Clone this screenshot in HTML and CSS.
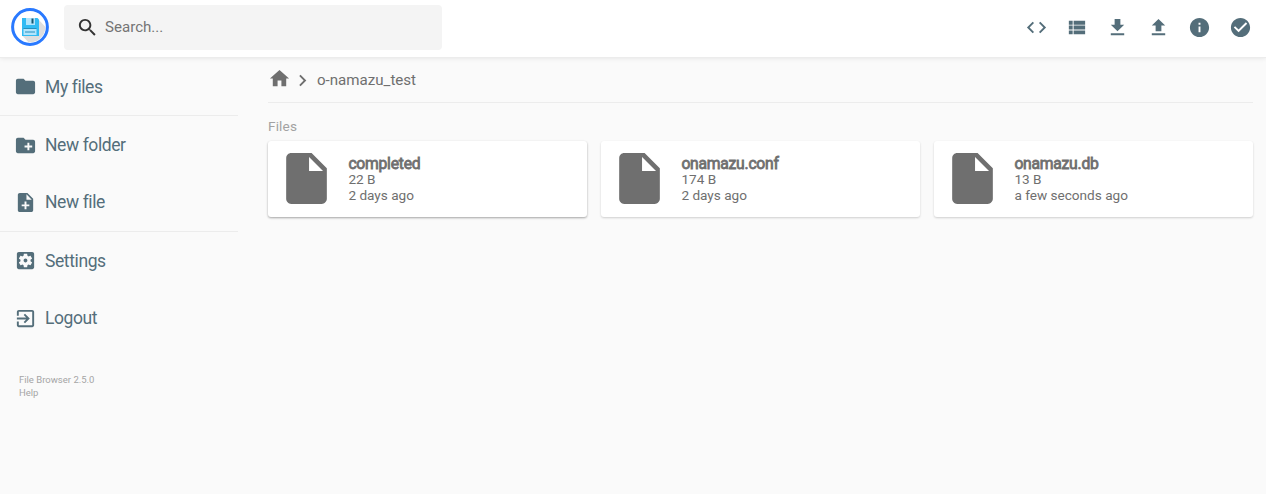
FILE: index.html
```html
<!DOCTYPE html>
<html lang="en">
<head>
<meta charset="utf-8">
<title>o-namazu_test - File Browser</title>
<link rel="stylesheet" href="styles.css">
</head>
<body>
<header class="topbar">
  <svg class="logo" viewBox="0 0 38 38">
    <circle cx="19" cy="19" r="17.5" fill="#fff"/>
    <path d="M27 11l7.5 8a16 16 0 0 1-17 15.300L11.500 28z" fill="#dedede"/>
    <circle cx="19" cy="19" r="17.400" fill="none" stroke="#2979ff" stroke-width="3"/>
    <path d="M11 10h15.500l1.500 1.500V28H11z" fill="#31bbf3"/>
    <path d="M15 10h9v7h-9z" fill="#b3e5fc"/>
    <path d="M20.500 10.500h2v5h-2z" fill="#14566f"/>
    <path d="M12.500 21h13v6h-13z" fill="#b3e5fc"/>
    <path d="M12.500 20h13v1h-13zM14 23.500h10v1H14z" fill="#278fbd"/>
  </svg>
  <div class="search">
    <svg class="icon" viewBox="0 0 24 24"><path d="M15.500 14h-.79l-.28-.27C15.410 12.590 16 11.110 16 9.500 16 5.910 13.090 3 9.500 3S3 5.910 3 9.500 5.910 16 9.500 16c1.610 0 3.090-.59 4.230-1.570l.27.28v.79l5 4.990L20.490 19l-4.990-5zm-6 0C7.010 14 5 11.990 5 9.500S7.010 5 9.500 5 14 7.010 14 9.500 11.990 14 9.500 14z"/></svg>
    <span>Search...</span>
  </div>
  <div class="actions">
    <span class="action"><svg class="icon" viewBox="0 0 24 24"><path d="M9.400 16.600L4.800 12l4.600-4.600L8 6l-6 6 6 6 1.400-1.400zm5.200 0l4.600-4.600-4.600-4.600L16 6l6 6-6 6-1.400-1.400z"/></svg></span>
    <span class="action"><svg class="icon" viewBox="0 0 24 24"><path d="M4 14h4v-4H4v4zm0 5h4v-4H4v4zM4 9h4V5H4v4zm5 5h12v-4H9v4zm0 5h12v-4H9v4zM9 5v4h12V5H9z"/></svg></span>
    <span class="action"><svg class="icon" viewBox="0 0 24 24"><path d="M19 9h-4V3H9v6H5l7 7 7-7zM5 18v2h14v-2H5z"/></svg></span>
    <span class="action"><svg class="icon" viewBox="0 0 24 24"><path d="M9 16h6v-6h4l-7-7-7 7h4zm-4 2h14v2H5z"/></svg></span>
    <span class="action"><svg class="icon" viewBox="0 0 24 24"><path d="M12 2C6.480 2 2 6.480 2 12s4.480 10 10 10 10-4.480 10-10S17.520 2 12 2zm1 15h-2v-6h2v6zm0-8h-2V7h2v2z"/></svg></span>
    <span class="action"><svg class="icon" viewBox="0 0 24 24"><path d="M12 2C6.480 2 2 6.480 2 12s4.480 10 10 10 10-4.480 10-10S17.520 2 12 2zm-2 15l-5-5 1.410-1.410L10 14.170l7.590-7.590L19 8l-9 9z"/></svg></span>
  </div>
</header>
<div class="layout">
  <nav class="sidebar">
    <div class="group">
      <a class="entry"><svg class="icon" viewBox="0 0 24 24"><path d="M10 4H4c-1.100 0-1.990.9-1.990 2L2 18c0 1.100.9 2 2 2h16c1.100 0 2-.9 2-2V8c0-1.100-.9-2-2-2h-8l-2-2z"/></svg>My files</a>
    </div>
    <div class="group">
      <a class="entry"><svg class="icon" viewBox="0 0 24 24"><path d="M20 6h-8l-2-2H4c-1.110 0-1.990.89-1.990 2L2 18c0 1.110.89 2 2 2h16c1.110 0 2-.89 2-2V8c0-1.110-.89-2-2-2zm-1 8h-3v3h-2v-3h-3v-2h3V9h2v3h3v2z"/></svg>New folder</a>
      <a class="entry"><svg class="icon" viewBox="0 0 24 24"><path d="M14 2H6c-1.100 0-1.990.9-1.990 2L4 20c0 1.100.89 2 1.990 2H18c1.100 0 2-.9 2-2V8l-6-6zm2 14h-3v3h-2v-3H8v-2h3v-3h2v3h3v2zm-3-7V3.500L18.500 9H13z"/></svg>New file</a>
    </div>
    <div class="group">
      <a class="entry"><svg class="icon" viewBox="0 0 24 24"><path d="M12 10c-1.100 0-2 .9-2 2s.9 2 2 2 2-.9 2-2-.9-2-2-2zm7-7H5c-1.110 0-2 .9-2 2v14c0 1.100.89 2 2 2h14c1.110 0 2-.9 2-2V5c0-1.100-.89-2-2-2zm-1.750 9c0 .23-.02.46-.05.68l1.480 1.160c.13.11.17.3.08.45l-1.400 2.420c-.09.15-.27.21-.43.15l-1.740-.7c-.36.28-.76.51-1.180.69l-.26 1.850c-.03.17-.18.3-.35.3h-2.800c-.17 0-.32-.13-.35-.29l-.26-1.850c-.43-.18-.82-.41-1.180-.69l-1.740.7c-.16.06-.34 0-.43-.15l-1.400-2.420c-.09-.15-.05-.34.08-.45l1.480-1.160c-.03-.23-.05-.46-.05-.69s.02-.46.05-.68l-1.480-1.160c-.13-.11-.17-.3-.08-.45l1.400-2.420c.09-.15.27-.21.43-.15l1.740.7c.36-.28.76-.51 1.180-.69l.26-1.850c.03-.17.18-.3.35-.3h2.800c.17 0 .32.13.35.29l.26 1.850c.43.18.82.41 1.180.69l1.740-.7c.16-.06.34 0 .43.15l1.400 2.420c.09.15.05.34-.08.45l-1.480 1.160c.03.23.05.46.05.69z"/></svg>Settings</a>
      <a class="entry"><svg class="icon" viewBox="0 0 24 24"><path d="M10.090 15.590L11.500 17l5-5-5-5-1.410 1.410L12.670 11H3v2h9.670l-2.580 2.590zM19 3H5c-1.110 0-2 .9-2 2v4h2V5h14v14H5v-4H3v4c0 1.100.89 2 2 2h14c1.100 0 2-.9 2-2V5c0-1.100-.9-2-2-2z"/></svg>Logout</a>
    </div>
    <div class="credits"><span>File Browser 2.5.0</span><span>Help</span></div>
  </nav>
  <main class="content">
    <div class="breadcrumbs">
      <svg class="icon home" viewBox="0 0 24 24"><path d="M10 20v-6h4v6h5v-8h3L12 3 2 12h3v8z"/></svg>
      <svg class="icon chevron" viewBox="0 0 24 24"><path d="M10 6L8.590 7.410 13.170 12l-4.580 4.590L10 18l6-6z"/></svg>
      <span>o-namazu_test</span>
    </div>
    <h2 class="heading">Files</h2>
    <div class="files">
      <div class="file active">
        <svg class="file-icon" viewBox="0 0 24 24"><path d="M6 2c-1.100 0-1.990.9-1.990 2L4 20c0 1.100.89 2 1.990 2H18c1.100 0 2-.9 2-2V8l-6-6H6zm7 7V3.500L18.500 9H13z"/></svg>
        <div class="info"><p class="name">completed</p><p>22 B</p><p>2 days ago</p></div>
      </div>
      <div class="file">
        <svg class="file-icon" viewBox="0 0 24 24"><path d="M6 2c-1.100 0-1.990.9-1.990 2L4 20c0 1.100.89 2 1.990 2H18c1.100 0 2-.9 2-2V8l-6-6H6zm7 7V3.500L18.500 9H13z"/></svg>
        <div class="info"><p class="name">onamazu.conf</p><p>174 B</p><p>2 days ago</p></div>
      </div>
      <div class="file">
        <svg class="file-icon" viewBox="0 0 24 24"><path d="M6 2c-1.100 0-1.990.9-1.990 2L4 20c0 1.100.89 2 1.990 2H18c1.100 0 2-.9 2-2V8l-6-6H6zm7 7V3.500L18.500 9H13z"/></svg>
        <div class="info"><p class="name">onamazu.db</p><p>13 B</p><p>a few seconds ago</p></div>
      </div>
    </div>
  </main>
</div>
</body>
</html>
```

FILE: styles.css
```css
* { box-sizing: border-box; }
body {
  margin: 0;
  height: 494px;
  overflow: hidden;
  background: #fafafa;
  color: #6f6f6f;
  font-family: Roboto, sans-serif;
  font-size: 15.100px;
}
p, h2 { margin: 0; }
.icon { width: 23px; height: 23px; fill: currentColor; flex: none; }

.topbar {
  display: flex;
  align-items: center;
  height: 58px;
  padding: 0 5.500px 3px 11px;
  background: #fff;
  border-bottom: 1px solid #ececec;
  box-shadow: 0 0 5px rgba(0, 0, 0, .1);
}
.logo { width: 38px; height: 38px; margin-right: 15px; }
.search {
  display: flex;
  align-items: center;
  gap: 6px;
  width: 378px;
  height: 45px;
  padding-left: 12px;
  background: #f4f4f4;
  border-radius: 4px;
  color: #757575;
}
.search .icon { color: #333; }
.actions { display: flex; margin-left: auto; color: #546e7a; }
.action { display: flex; justify-content: center; width: 40.800px; }

.layout { display: flex; }
.sidebar { width: 238px; color: #546e7a; font-size: 17.500px; letter-spacing: -.4px; }
.group + .group { border-top: 1px solid #ececec; }
.entry {
  display: flex;
  align-items: center;
  gap: 8.500px;
  height: 57.400px;
  padding-left: 13.500px;
}
.credits {
  display: flex;
  flex-direction: column;
  margin: 26px 0 0 19px;
  color: #a5a5a5;
  font-size: 9.500px;
  letter-spacing: 0;
  line-height: 13px;
}

.content { flex: 1; padding: 0 13px 0 30px; }
.breadcrumbs {
  display: flex;
  align-items: center;
  height: 45px;
  border-bottom: 1px solid #ececec;
}
.home { margin-bottom: 3px; }
.chevron { margin: 0 3px 0 0; }
.heading {
  margin: 15px 0 6px;
  color: #a2a2a2;
  font-size: 13.600px;
  font-weight: 400;
  letter-spacing: .15px;
  line-height: 17px;
}
.files { display: grid; grid-template-columns: repeat(3, 1fr); gap: 14px; }
.file {
  display: flex;
  align-items: center;
  gap: 11.400px;
  height: 76px;
  padding-left: 8px;
  background: #fff;
  border-radius: 3px;
  box-shadow: 0 1px 3px rgba(0, 0, 0, .06), 0 1px 2px rgba(0, 0, 0, .12);
}
.file.active { box-shadow: 0 1px 3px rgba(0, 0, 0, .12), 0 1px 2px rgba(0, 0, 0, .24); }
.file-icon { width: 61px; height: 61px; margin-bottom: 1px; fill: #6f6f6f; }
.info { font-size: 13.600px; line-height: 15.500px; }
.name {
  font-size: 15.700px;
  letter-spacing: -.25px;
  line-height: 17px;
  -webkit-text-stroke: .8px currentColor;
}
```
